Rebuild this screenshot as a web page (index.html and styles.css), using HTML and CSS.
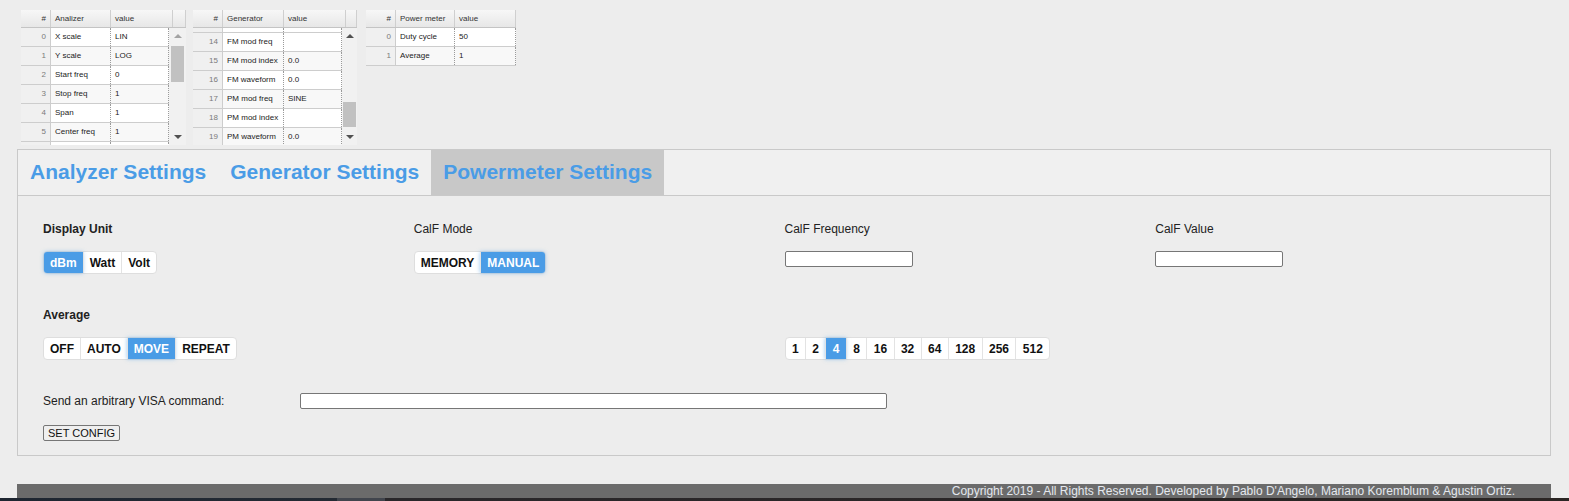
FILE: index.html
```html
<!DOCTYPE html>
<html>
<head>
<meta charset="utf-8">
<title>Powermeter Settings</title>
<link rel="stylesheet" href="styles.css">
</head>
<body>
<div class="grids">
  <div class="hot hot-an">
    <div class="hot-head">
      <div class="hc hc-num">#</div><div class="hc hc-key">Analizer</div><div class="hc hc-val">value</div><div class="hc hc-corner"></div>
    </div>
    <div class="hot-body">
      <div class="hot-rows">
        <div class="hr"><div class="rn">0</div><div class="ck">X scale</div><div class="cv">LIN</div></div>
        <div class="hr odd"><div class="rn">1</div><div class="ck">Y scale</div><div class="cv">LOG</div></div>
        <div class="hr"><div class="rn">2</div><div class="ck">Start freq</div><div class="cv">0</div></div>
        <div class="hr odd"><div class="rn">3</div><div class="ck">Stop freq</div><div class="cv">1</div></div>
        <div class="hr"><div class="rn">4</div><div class="ck">Span</div><div class="cv">1</div></div>
        <div class="hr odd"><div class="rn">5</div><div class="ck">Center freq</div><div class="cv">1</div></div>
        <div class="hr"><div class="rn"></div><div class="ck"></div><div class="cv"></div></div>
      </div>
      <div class="sb sb-an">
        <div class="sb-btn"><span class="arr up dim"></span></div>
        <div class="sb-track"><div class="sb-thumb thumb-an"></div></div>
        <div class="sb-btn"><span class="arr down"></span></div>
      </div>
    </div>
  </div>

  <div class="hot hot-gen">
    <div class="hot-head">
      <div class="hc hc-num">#</div><div class="hc hc-key">Generator</div><div class="hc hc-val">value</div><div class="hc hc-corner"></div>
    </div>
    <div class="hot-body">
      <div class="hot-rows">
        <div class="hr hr-part"><div class="rn"></div><div class="ck"></div><div class="cv"></div></div>
        <div class="hr"><div class="rn">14</div><div class="ck">FM mod freq</div><div class="cv"></div></div>
        <div class="hr odd"><div class="rn">15</div><div class="ck">FM mod index</div><div class="cv">0.0</div></div>
        <div class="hr"><div class="rn">16</div><div class="ck">FM waveform</div><div class="cv">0.0</div></div>
        <div class="hr odd"><div class="rn">17</div><div class="ck">PM mod freq</div><div class="cv">SINE</div></div>
        <div class="hr"><div class="rn">18</div><div class="ck">PM mod index</div><div class="cv"></div></div>
        <div class="hr odd"><div class="rn">19</div><div class="ck">PM waveform</div><div class="cv">0.0</div></div>
      </div>
      <div class="sb sb-gen">
        <div class="sb-btn"><span class="arr up"></span></div>
        <div class="sb-track"><div class="sb-thumb thumb-gen"></div></div>
        <div class="sb-btn"><span class="arr down"></span></div>
      </div>
    </div>
  </div>

  <div class="hot hot-pm">
    <div class="hot-head">
      <div class="hc hc-num">#</div><div class="hc hc-key">Power meter</div><div class="hc hc-val">value</div>
    </div>
    <div class="hot-rows">
      <div class="hr"><div class="rn">0</div><div class="ck">Duty cycle</div><div class="cv">50</div></div>
      <div class="hr odd"><div class="rn">1</div><div class="ck">Average</div><div class="cv">1</div></div>
    </div>
  </div>
</div>

<div class="panel">
  <div class="tabs">
    <div class="tab">Analyzer Settings</div>
    <div class="tab">Generator Settings</div>
    <div class="tab active">Powermeter Settings</div>
  </div>
  <div class="content">
    <div class="fields">
      <div class="field">
        <div class="label bold">Display Unit</div>
        <div class="btn-group">
          <span class="btn on">dBm</span><span class="btn">Watt</span><span class="btn">Volt</span>
        </div>
      </div>
      <div class="field">
        <div class="label">CalF Mode</div>
        <div class="btn-group">
          <span class="btn">MEMORY</span><span class="btn on">MANUAL</span>
        </div>
      </div>
      <div class="field">
        <div class="label">CalF Frequency</div>
        <input class="txt" type="text">
      </div>
      <div class="field">
        <div class="label">CalF Value</div>
        <input class="txt" type="text">
      </div>
      <div class="field">
        <div class="label bold">Average</div>
        <div class="btn-group">
          <span class="btn">OFF</span><span class="btn">AUTO</span><span class="btn on">MOVE</span><span class="btn">REPEAT</span>
        </div>
      </div>
      <div class="field"></div>
      <div class="field">
        <div class="label"></div>
        <div class="btn-group nums">
          <span class="btn">1</span><span class="btn">2</span><span class="btn on">4</span><span class="btn">8</span><span class="btn">16</span><span class="btn">32</span><span class="btn">64</span><span class="btn">128</span><span class="btn">256</span><span class="btn">512</span>
        </div>
      </div>
      <div class="field"></div>
    </div>
    <div class="visa">
      <span class="visa-label">Send an arbitrary VISA command:</span>
      <input class="visa-input" type="text">
    </div>
    <button class="set-btn" type="button">SET CONFIG</button>
  </div>
</div>

<div class="footer">Copyright 2019 - All Rights Reserved. Developed by Pablo D'Angelo, Mariano Koremblum &amp; Agustin Ortiz.</div>
<div class="strip"></div>
</body>
</html>
```

FILE: styles.css
```css
* { box-sizing: border-box; }

html, body {
  margin: 0;
  padding: 0;
  background: #ededed;
  font-family: "Liberation Sans", Arial, sans-serif;
  color: #222;
  overflow: hidden;
}

/* ---------- data grids ---------- */
.grids {
  display: flex;
  align-items: flex-start;
  padding: 10px 0 0 21px;
  height: 145px;
}

.hot {
  font-size: 8px;
  color: #222;
  background: #f0f0f0;
}
.hot-an { width: 165px; height: 135px; margin-right: 7px; }
.hot-gen { width: 164px; height: 135px; margin-right: 9px; }
.hot-pm { width: 150px; }

.hot-head {
  display: flex;
  height: 18px;
  background: linear-gradient(#f7f7f7, #e7e7e7);
  border-bottom: 1px solid #c4c4c4;
}
.hc {
  line-height: 17px;
  padding: 0 4px;
  border-right: 1px solid #cfcfcf;
  white-space: nowrap;
  overflow: hidden;
  color: #333;
}
.hc-num { width: 30px; text-align: right; }
.hc-corner { padding: 0; }

.hot-an .hc-key { width: 60px; }
.hot-an .hc-val { width: 62px; }
.hot-an .hc-corner { width: 13px; }
.hot-gen .hc-key { width: 61px; }
.hot-gen .hc-val { width: 62px; }
.hot-gen .hc-corner { width: 11px; }
.hot-pm .hc-key { width: 59px; }
.hot-pm .hc-val { width: 61px; }

.hot-body {
  display: flex;
  height: 117px;
  overflow: hidden;
}
.hot-rows { flex: 1; min-width: 0; }

.hr {
  display: flex;
  height: 19px;
  border-bottom: 1px solid #cdcdcd;
  background: #fff;
}
.hr.odd { background: #f8f8f8; }
.hr-part { height: 5px; }

.rn, .ck, .cv {
  line-height: 18px;
  padding: 0 4px;
  white-space: nowrap;
  overflow: hidden;
}
.rn {
  width: 30px;
  text-align: right;
  color: #7a7a7a;
  background: #f0f0f0;
  border-right: 1px solid #cdcdcd;
}
.ck { border-right: 1px dotted #9a9a9a; }
.cv { flex: 1; border-right: 1px dotted #9a9a9a; }

.hot-an .ck { width: 60px; }
.hot-gen .ck { width: 61px; }
.hot-pm .ck { width: 59px; }
.hot-pm .cv { width: 61px; flex: none; }

/* scrollbars */
.sb {
  display: flex;
  flex-direction: column;
  background: #f1f1f1;
}
.sb-an { width: 17px; }
.sb-gen { width: 15px; }
.sb-btn {
  height: 16px;
  display: flex;
  align-items: center;
  justify-content: center;
}
.sb-track { flex: 1; }
.sb-thumb { background: #c1c1c1; }
.thumb-an { height: 36px; margin: 2px 2px 0; }
.thumb-gen { height: 25px; margin: 58px 1px 0; }

.arr {
  width: 0;
  height: 0;
  border-left: 4px solid transparent;
  border-right: 4px solid transparent;
}
.arr.up { border-bottom: 4px solid #505050; }
.arr.up.dim { border-bottom-color: #a3a3a3; }
.arr.down { border-top: 4px solid #505050; }

/* ---------- settings panel ---------- */
.panel {
  margin: 4px 18px 0 17px;
  border: 1px solid #c9c9c9;
}
.tabs {
  display: flex;
  height: 46px;
  background: #f0f0f0;
  border-bottom: 1px solid #c9c9c9;
}
.tab {
  display: flex;
  align-items: center;
  padding: 0 12px 1px;
  font-size: 21px;
  font-weight: bold;
  color: #4a9ce6;
  white-space: nowrap;
}
.tab.active { background: #c8c8c8; }

.content {
  padding: 25px 24px 14px 25px;
}
.fields {
  display: grid;
  grid-template-columns: repeat(4, 1fr);
  row-gap: 33px;
}
.field {
  display: flex;
  flex-direction: column;
  align-items: flex-start;
}
.label {
  height: 14px;
  line-height: 14px;
  font-size: 12px;
  color: #222;
  margin-bottom: 16px;
  margin-top: 1px;
}
.label.bold { font-weight: bold; }

.btn-group {
  display: flex;
  height: 23px;
  margin-top: -1px;
  border: 1px solid #dedede;
  border-radius: 4px;
  background: #fff;
}
.btn {
  display: flex;
  align-items: center;
  padding: 0 6px;
  font-size: 12px;
  font-weight: bold;
  color: #111;
  border-left: 1px solid #e3e3e3;
  white-space: nowrap;
}
.btn:first-child { border-left: none; border-radius: 3px 0 0 3px; }
.btn:last-child { border-radius: 0 3px 3px 0; }
.btn.on {
  background: #4a9ce6;
  color: #fff;
  box-shadow: 0 0 4px rgba(74, 156, 230, 0.55);
}
.nums .btn { padding: 0 6.4px; }

.txt {
  width: 128px;
  height: 16px;
  margin: -1px 0 0;
  border: 1px solid #767676;
  border-radius: 2px;
  background: #fff;
  font-size: 11px;
  padding: 0 2px;
}

.visa {
  display: flex;
  align-items: center;
  height: 16px;
  margin-top: 33px;
}
.visa-label {
  width: 257px;
  font-size: 12px;
  color: #222;
  white-space: nowrap;
}
.visa-input {
  width: 587px;
  height: 16px;
  margin: 0;
  border: 1px solid #767676;
  border-radius: 2px;
  background: #fff;
  font-size: 11px;
}

.set-btn {
  display: block;
  margin: 16px 0 0;
  height: 16px;
  padding: 0 4px;
  font-family: "Liberation Sans", Arial, sans-serif;
  font-size: 11px;
  line-height: 14px;
  color: #111;
  background: #efefef;
  border: 1px solid #767676;
  border-radius: 2px;
}

/* ---------- footer ---------- */
.footer {
  margin: 28px 18px 0 17px;
  height: 14px;
  line-height: 14px;
  background: #6b6b6b;
  color: #e4e8ee;
  font-size: 12px;
  text-align: right;
  padding-right: 36px;
  white-space: nowrap;
}
.strip {
  height: 3px;
  background: linear-gradient(to right, #1e2631 0, #232a33 337px, #41454d 337px, #41454d 385px, #29272a 385px, #2b2624 100%);
}
```
